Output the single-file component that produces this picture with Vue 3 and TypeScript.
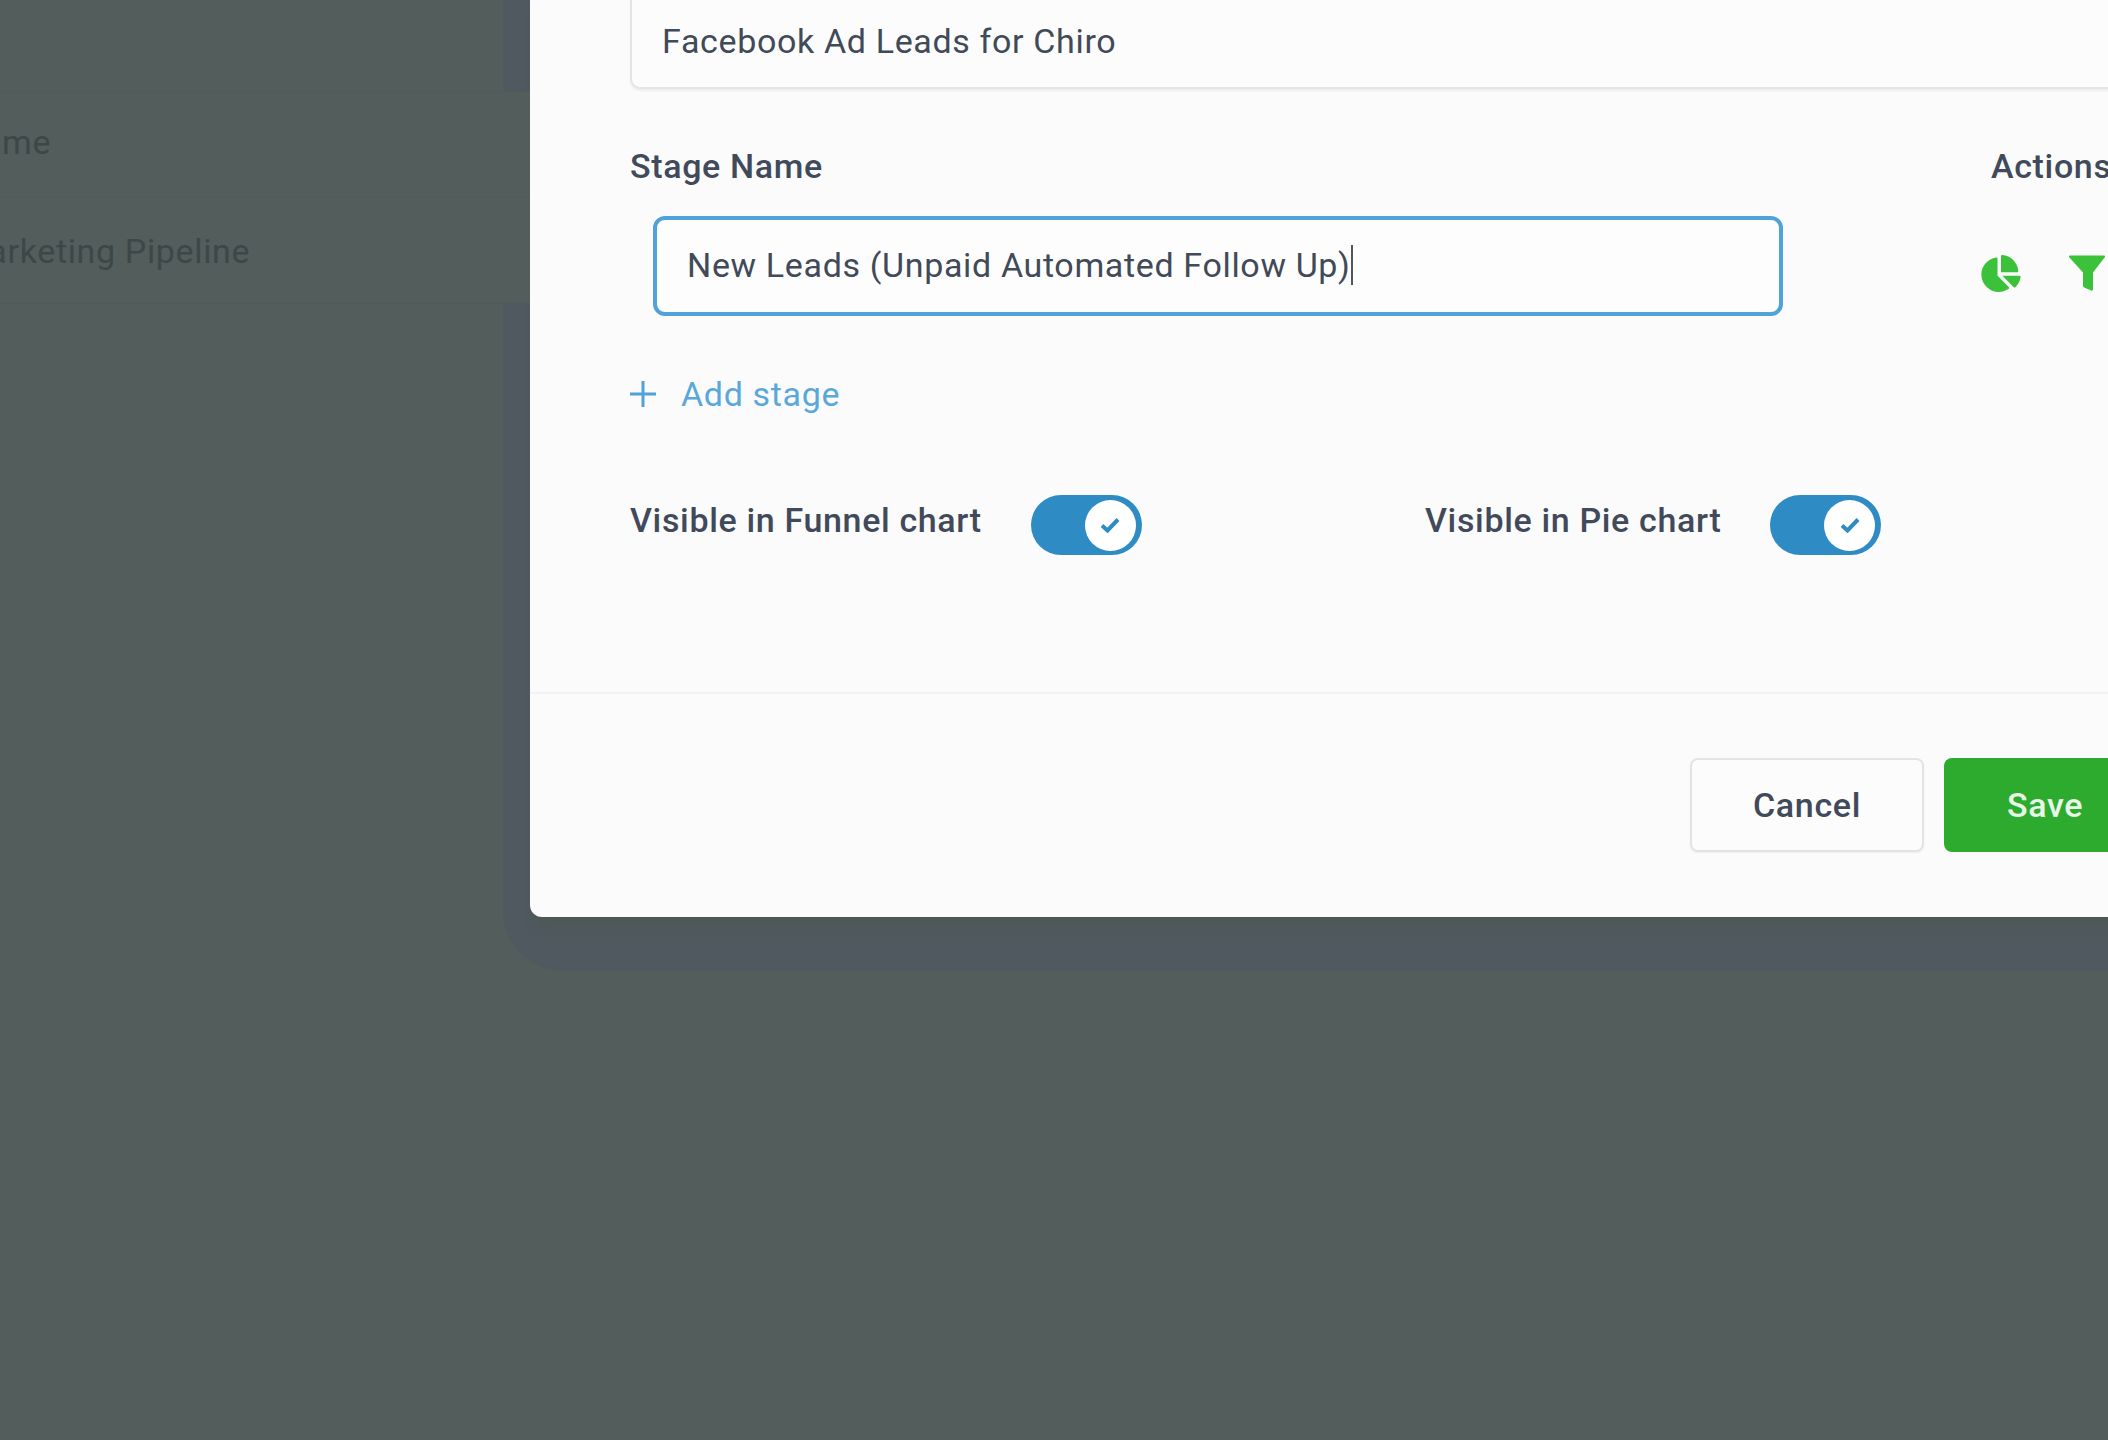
<script setup lang="ts">
const rows = ['Name', 'Marketing Pipeline']
const toggles = [
  { label: 'Visible in Funnel chart', cls: 'toggle-group--funnel' },
  { label: 'Visible in Pie chart', cls: 'toggle-group--pie' },
]
</script>

<template>
  <div class="screen">
    <div class="list">
      <div v-for="(row, i) in rows" :key="row" class="list__row" :class="`list__row--${i}`">
        <span class="list__text">{{ row }}</span>
      </div>
    </div>

    <section class="modal">
      <div class="pipeline-name">Facebook Ad Leads for Chiro</div>

      <div class="stage-head">
        <span class="label stage-head__name">Stage Name</span>
        <span class="label">Actions</span>
      </div>

      <div class="stage-row">
        <div class="stage-input">New Leads (Unpaid Automated Follow Up)<i class="caret"></i></div>
        <div class="actions">
          <svg class="icon-pie" viewBox="0 0 544 512">
            <path d="M527.79 288H290.5l158.03 158.03c6.04 6.04 15.98 6.53 22.19.68 38.7-36.46 65.32-85.61 73.13-140.86 1.34-9.46-6.51-17.85-16.06-17.85zm-15.83-64.8C503.72 103.74 408.26 8.28 288.8.04 279.68-.59 272 7.1 272 16.24V240h223.77c9.14 0 16.82-7.68 16.19-16.8zM224 288V50.71c0-9.55-8.39-17.4-17.84-16.06C86.99 51.49-4.1 155.6.14 280.37 4.5 408.51 114.83 513.59 243.03 511.98c50.4-.63 96.97-16.87 135.26-44.03 7.9-5.6 8.42-17.23 1.57-24.08L224 288z" />
          </svg>
          <svg class="icon-funnel" viewBox="0 0 36 36">
            <path d="M1 0h34c1 0 1.500 1 .8 1.800L24 17v17c0 1-1 1.500-1.800 1l-7-3c-.8-.5-1.200-1-1.200-2V17L.2 1.800C-.5 1 0 0 1 0z" />
          </svg>
        </div>
      </div>

      <div class="add-stage">
        <svg class="add-stage__plus" viewBox="0 0 26 26">
          <path d="M13 0v26M0 13h26" />
        </svg>
        <span>Add stage</span>
      </div>

      <div class="toggles">
        <div v-for="t in toggles" :key="t.label" class="toggle-group" :class="t.cls">
          <span class="label toggle-group__label">{{ t.label }}</span>
          <span class="toggle">
            <span class="toggle__knob">
              <svg viewBox="0 0 20 16"><path d="M2 8.500l5.500 5L18 2.500" /></svg>
            </span>
          </span>
        </div>
      </div>

      <footer class="modal__footer">
        <button class="btn btn--cancel">Cancel</button>
        <button class="btn btn--save">Save</button>
      </footer>
    </section>
  </div>
</template>

<style>
html,
body {
  margin: 0;
  background: #525d5c;
}
</style>

<style scoped>
.screen {
  isolation: isolate;
  display: flex;
  align-items: flex-start;
  width: 2108px;
  height: 1440px;
  overflow: hidden;
  background: #525d5c;
  font-family: Roboto, 'Liberation Sans', sans-serif;
  font-size: 34px;
  letter-spacing: 0.65px;
}

.list {
  position: relative;
  z-index: 1;
  flex: 0 0 530px;
  padding-top: 91px;
}

.list__row {
  display: flex;
  align-items: center;
  height: 105px;
  background: #525d5c;
  border-top: 1px solid #4f5a59;
  overflow: hidden;
  white-space: nowrap;
}

.list__row + .list__row {
  border-bottom: 1px solid #4f5a59;
}

.list__row--0 {
  padding-bottom: 5px;
  height: 100px;
}

.list__text {
  margin-left: -42px;
  color: #3c4848;
}

.modal {
  position: relative;
  flex: 0 0 1700px;
  box-sizing: border-box;
  height: 917px;
  padding-left: 100px;
  background: #fbfbfc;
  border-bottom-left-radius: 12px;
  box-shadow: 0 14px 12px -8px rgba(78, 88, 80, 0.9);
}

/* wide soft layer that sits behind the dialog */
.modal::before {
  content: '';
  position: absolute;
  z-index: -1;
  top: 0;
  right: 0;
  bottom: -54px;
  left: -27px;
  background: #50595f;
  border-bottom-left-radius: 60px;
}

.pipeline-name {
  box-sizing: border-box;
  display: flex;
  align-items: flex-end;
  width: 1560px;
  height: 89px;
  padding: 0 0 26px 30px;
  background: #fcfcfc;
  border: 2px solid #e3e5e8;
  border-top: 0;
  border-radius: 0 0 10px 10px;
  box-shadow: 0 2px 2px rgba(0, 0, 0, 0.05);
  color: #414a58;
}

.label {
  font-weight: 500;
  color: #414a5a;
  white-space: nowrap;
}

.stage-head {
  display: flex;
  margin-top: 57px;
  line-height: 40px;
}

.stage-head__name {
  flex: 0 0 1361px;
}

.stage-row {
  display: flex;
  align-items: flex-start;
  margin-top: 30px;
}

.stage-input {
  box-sizing: border-box;
  display: flex;
  align-items: center;
  width: 1130px;
  height: 100px;
  margin-left: 23px;
  padding: 0 0 2px 30px;
  background: #fdfdfd;
  border: 4px solid #4fa3da;
  border-radius: 12px;
  color: #414a58;
  white-space: nowrap;
}

.caret {
  width: 2px;
  height: 40px;
  background: #555;
}

.actions {
  display: flex;
  gap: 48px;
  margin: 39px 0 0 198px;
}

.icon-pie,
.icon-funnel {
  display: block;
  height: 37px;
  fill: #3cc13b;
}

.icon-pie {
  width: 40px;
}

.icon-funnel {
  width: 36px;
}

.add-stage {
  display: flex;
  align-items: center;
  gap: 25px;
  margin-top: 58px;
  line-height: 40px;
  color: #5aa8da;
}

.add-stage__plus {
  width: 26px;
  height: 26px;
  fill: none;
  stroke: #4fa3da;
  stroke-width: 3;
}

.toggles {
  display: flex;
  margin-top: 81px;
  height: 60px;
}

.toggle-group {
  display: flex;
  align-items: center;
  gap: 49px;
}

.toggle-group__label {
  padding-bottom: 10px;
}

.toggle-group--funnel {
  width: 795px;
}

.toggle {
  box-sizing: border-box;
  display: flex;
  align-items: center;
  justify-content: flex-end;
  width: 111px;
  height: 60px;
  padding-right: 6px;
  background: #2f8bc4;
  border-radius: 30px;
}

.toggle__knob {
  display: flex;
  align-items: center;
  justify-content: center;
  width: 51px;
  height: 51px;
  background: #fff;
  border-radius: 50%;
}

.toggle__knob svg {
  width: 20px;
  height: 16px;
  fill: none;
  stroke: #2f8bc4;
  stroke-width: 4;
}

.modal__footer {
  display: flex;
  justify-content: flex-end;
  gap: 20px;
  margin: 137px 0 0 -100px;
  padding: 64px 84px 0 0;
  border-top: 2px solid #f1f2f3;
}

.btn {
  box-sizing: border-box;
  height: 94px;
  padding-bottom: 2px;
  border-radius: 8px;
  font-family: inherit;
  font-size: 34px;
  font-weight: 500;
  letter-spacing: 0.65px;
}

.btn--cancel {
  width: 234px;
  background: #fcfcfd;
  border: 2px solid #e1e3e6;
  color: #414a5a;
  box-shadow: 0 1px 2px rgba(0, 0, 0, 0.06);
}

.btn--save {
  width: 202px;
  background: #2dab2f;
  border: 0;
  color: #e8f6e8;
}
</style>
